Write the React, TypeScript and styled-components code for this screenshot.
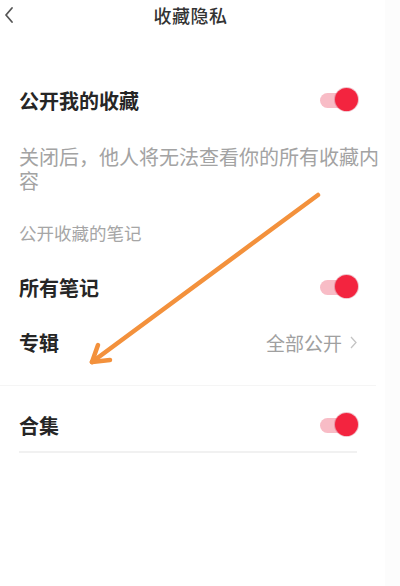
import React from "react";
import styled, { createGlobalStyle } from "styled-components";

const Global = createGlobalStyle`
  html, body { margin: 0; padding: 0; background: #ffffff; }
  body { font-family: "Noto Sans CJK SC", "Noto Sans", sans-serif; }
  #root { width: 400px; height: 586px; }
`;

const Page = styled.div`
  position: relative;
  width: 400px;
  height: 586px;
  display: flex;
  background: #fcfcfc;
  overflow: hidden;
`;

const Panel = styled.div`
  width: 385px;
  background: #ffffff;
  display: flex;
  flex-direction: column;
`;

const Header = styled.div`
  height: 30px;
  display: flex;
  align-items: center;
  justify-content: center;
  position: relative;
`;

const BackButton = styled.div`
  position: absolute;
  left: 4px;
  top: 6px;
  width: 10px;
  height: 18px;
  display: flex;
  align-items: center;
`;

const Title = styled.div`
  font-size: 18px;
  font-weight: 500;
  color: #333;
  letter-spacing: 0.5px;
  margin-left: -4px;
`;

const Body = styled.div`
  display: flex;
  flex-direction: column;
  padding: 44px 28px 0 19px;
`;

const Row = styled.div<{ $h: number; $line?: boolean }>`
  height: ${(p) => p.$h}px;
  display: flex;
  align-items: center;
  justify-content: space-between;
  border-bottom: ${(p) => (p.$line ? "2px solid #f1f1f1" : "none")};
`;

const Label = styled.div`
  font-size: 20px;
  font-weight: 600;
  color: #262626;
`;

const Desc = styled.div`
  font-size: 20px;
  color: #a3a3a3;
  padding: 19px 0 20px;
  white-space: nowrap;
  margin-right: -30px;
  display: flex;
  flex-direction: column;
`;

const DescLine = styled.div`
  height: 24px;
  line-height: 24px;
`;

const SectionLabel = styled.div`
  font-size: 17.5px;
  line-height: 26px;
  color: #a6a6a6;
  height: 47px;
  padding-top: 7px;
  box-sizing: border-box;
`;

const Value = styled.div`
  display: flex;
  align-items: center;
  gap: 8px;
  font-size: 19px;
  color: #a0a0a0;
`;

const Divider = styled.div`
  height: 1px;
  background: #f5f5f5;
  margin: 15px -19px 13px -19px;
`;

const Track = styled.div`
  position: relative;
  width: 38px;
  height: 24px;
  margin-right: -1px;
`;

const TrackBar = styled.div`
  position: absolute;
  left: 0;
  top: 5px;
  width: 30px;
  height: 15px;
  border-radius: 8px;
  background: #f8bcc6;
`;

const Knob = styled.div`
  position: absolute;
  right: 0;
  top: 0;
  width: 23px;
  height: 23px;
  border-radius: 50%;
  background: #f3243f;
  box-shadow: 0 0 0 1px rgba(190, 20, 50, 0.25);
`;

const ArrowLayer = styled.svg`
  position: absolute;
  left: 0;
  top: 0;
  pointer-events: none;
`;

const Toggle = () => (
  <Track>
    <TrackBar />
    <Knob />
  </Track>
);

export default function App() {
  return (
    <>
      <Global />
      <Page>
        <Panel>
          <Header>
            <BackButton>
              <svg width="10" height="18" viewBox="0 0 10 18">
                <path d="M8 2 L2 9 L8 16" fill="none" stroke="#555" strokeWidth="1.8" strokeLinecap="round" strokeLinejoin="round" />
              </svg>
            </BackButton>
            <Title>收藏隐私</Title>
          </Header>
          <Body>
            <Row $h={52}>
              <Label>公开我的收藏</Label>
              <Toggle />
            </Row>
            <Desc>
              <DescLine>关闭后，他人将无法查看你的所有收藏内</DescLine>
              <DescLine>容</DescLine>
            </Desc>
            <SectionLabel>公开收藏的笔记</SectionLabel>
            <Row $h={54}>
              <Label>所有笔记</Label>
              <Toggle />
            </Row>
            <Row $h={56}>
              <Label>专辑</Label>
              <Value>
                全部公开
                <svg width="7" height="13" viewBox="0 0 7 13">
                  <path d="M1 1 L6 6.5 L1 12" fill="none" stroke="#c4c4c4" strokeWidth="1.3" />
                </svg>
              </Value>
            </Row>
            <Divider />
            <Row $h={52} $line>
              <Label>合集</Label>
              <Toggle />
            </Row>
          </Body>
        </Panel>
        <ArrowLayer width="400" height="586" viewBox="0 0 400 586">
          <g stroke="#f3913c" strokeWidth="4.5" strokeLinecap="round" strokeLinejoin="round" fill="none">
            <path d="M318 195 L92 362" />
            <path d="M92 362 L98 345" />
            <path d="M92 362 L110 360" />
          </g>
        </ArrowLayer>
      </Page>
    </>
  );
}
